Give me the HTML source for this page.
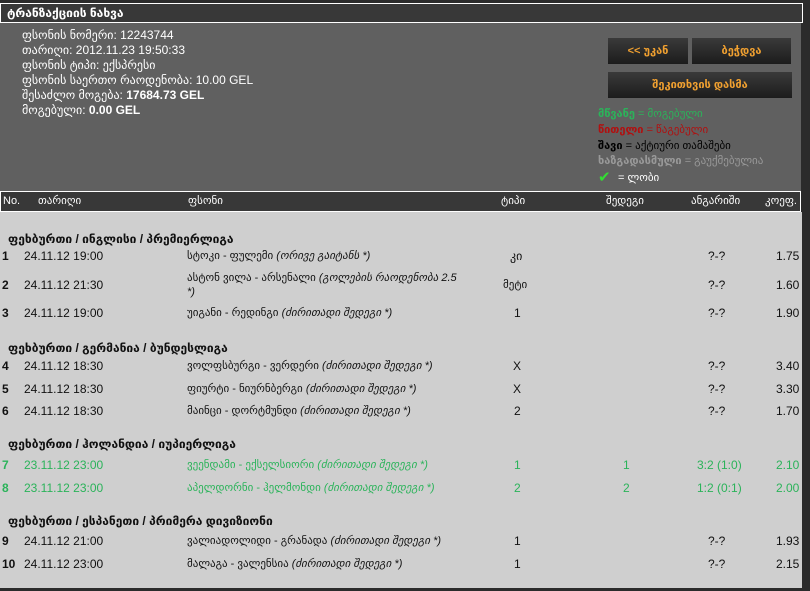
<!DOCTYPE html><html><head><meta charset="utf-8"><style>
body{margin:0;width:810px;height:591px;background:#2b2b2b;font-family:"Liberation Sans","DejaVu Sans",sans-serif;position:relative;overflow:hidden;font-size:12px}
div{position:absolute;white-space:nowrap}
.t{left:0;top:3px;width:795px;height:18px;background:#383838;border:1px solid #fff;color:#fff;font-weight:bold;font-size:12px;line-height:18px;padding-left:6px}
.info{left:0;top:23px;width:801px;height:168px;background:#606060}
.i{left:22px;color:#fff;font-size:12px}
.btn{background:linear-gradient(#3a3a3a,#1c1c1c);color:#f0a030;font-weight:bold;font-size:11px;text-align:center;line-height:26px;height:26px}
.hd{left:0;top:191px;width:799px;height:19px;background:#383838;border:1px solid #fff;color:#fff;font-size:11px;line-height:19px}
.body{left:0;top:212px;width:802px;height:376px;background:#cfcfcf}
.r{color:#111;font-size:12px}
.s{font-weight:bold;color:#111;font-size:12px;left:8px}
.g{color:#2bb35a}
.lg{font-size:11px}
em{font-style:italic}
</style></head><body>
<div class="t">ტრანზაქციის ნახვა</div>
<div class="info">
<div class="i" style="top:5px">ფსონის ნომერი: 12243744</div>
<div class="i" style="top:20px">თარიღი: 2012.11.23 19:50:33</div>
<div class="i" style="top:35px">ფსონის ტიპი: ექსპრესი</div>
<div class="i" style="top:50px">ფსონის საერთო რაოდენობა: 10.00 GEL</div>
<div class="i" style="top:65px">შესაძლო მოგება: <b>17684.73 GEL</b></div>
<div class="i" style="top:80px">მოგებული: <b>0.00 GEL</b></div>
<div class="btn" style="left:608px;top:15px;width:80px">&lt;&lt; უკან</div>
<div class="btn" style="left:692px;top:15px;width:99px">ბეჭდვა</div>
<div class="btn" style="left:608px;top:49px;width:184px">შეკითხვის დასმა</div>
<div class="lg" style="left:598px;top:84px;color:#2bb35a"><b>მწვანე</b> = მოგებული</div>
<div class="lg" style="left:598px;top:100px;color:#b01010"><b>წითელი</b> = წაგებული</div>
<div class="lg" style="left:598px;top:116px;color:#000"><b>შავი</b> = აქტიური თამაშები</div>
<div class="lg" style="left:598px;top:131px;color:#999"><b>ხაზგადასმული</b> = გაუქმებულია</div>
<div style="left:598px;top:145px;color:#33dd33;font-size:15px;font-weight:bold">✔</div>
<div style="left:618px;top:148px;color:#fff;font-size:11px">= ლობი</div>
</div>
<div class="hd"><div style="left:2px">No.</div><div style="left:37px">თარიღი</div><div style="left:187px">ფსონი</div><div style="left:500px">ტიპი</div><div style="left:605px">შედეგი</div><div style="left:690px">ანგარიში</div><div style="left:764px">კოეფ.</div></div>
<div class="body"></div>
<div class="s" style="top:232px">ფეხბურთი / ინგლისი / პრემიერლიგა</div>
<div class="s" style="top:341px">ფეხბურთი / გერმანია / ბუნდესლიგა</div>
<div class="s" style="top:437px">ფეხბურთი / ჰოლანდია / იუპიერლიგა</div>
<div class="s" style="top:514px">ფეხბურთი / ესპანეთი / პრიმერა დივიზიონი</div>

<div class="r" style="top:249px;left:2px"><b>1</b></div><div class="r" style="top:249px;left:24px">24.11.12 19:00</div><div class="r" style="top:249px;left:187px;font-size:11px">სტოკი - ფულემი <em>(ორივე გაიტანს *)</em></div><div class="r" style="top:249px;left:510px">კი</div><div class="r" style="top:249px;left:708px">?-?</div><div class="r" style="top:249px;left:776px">1.75</div>

<div class="r" style="top:271px;left:187px;font-size:11px">ასტონ ვილა - არსენალი <em>(გოლების რაოდენობა 2.5</em></div><div class="r" style="top:286px;left:187px;font-size:11px"><em>*)</em></div>
<div class="r" style="top:278px;left:2px"><b>2</b></div><div class="r" style="top:278px;left:24px">24.11.12 21:30</div><div class="r" style="top:278px;left:503px;font-size:11px">მეტი</div><div class="r" style="top:278px;left:708px">?-?</div><div class="r" style="top:278px;left:776px">1.60</div>

<div class="r" style="top:306px;left:2px"><b>3</b></div><div class="r" style="top:306px;left:24px">24.11.12 19:00</div><div class="r" style="top:306px;left:187px;font-size:11px">უიგანი - რედინგი <em>(ძირითადი შედეგი *)</em></div><div class="r" style="top:306px;left:514px">1</div><div class="r" style="top:306px;left:708px">?-?</div><div class="r" style="top:306px;left:776px">1.90</div>

<div class="r" style="top:359px;left:2px"><b>4</b></div><div class="r" style="top:359px;left:24px">24.11.12 18:30</div><div class="r" style="top:359px;left:187px;font-size:11px">ვოლფსბურგი - ვერდერი <em>(ძირითადი შედეგი *)</em></div><div class="r" style="top:359px;left:513px">X</div><div class="r" style="top:359px;left:708px">?-?</div><div class="r" style="top:359px;left:776px">3.40</div>

<div class="r" style="top:382px;left:2px"><b>5</b></div><div class="r" style="top:382px;left:24px">24.11.12 18:30</div><div class="r" style="top:382px;left:187px;font-size:11px">ფიურტი - ნიურნბერგი <em>(ძირითადი შედეგი *)</em></div><div class="r" style="top:382px;left:513px">X</div><div class="r" style="top:382px;left:708px">?-?</div><div class="r" style="top:382px;left:776px">3.30</div>

<div class="r" style="top:404px;left:2px"><b>6</b></div><div class="r" style="top:404px;left:24px">24.11.12 18:30</div><div class="r" style="top:404px;left:187px;font-size:11px">მაინცი - დორტმუნდი <em>(ძირითადი შედეგი *)</em></div><div class="r" style="top:404px;left:514px">2</div><div class="r" style="top:404px;left:708px">?-?</div><div class="r" style="top:404px;left:776px">1.70</div>

<div class="r g" style="top:458px;left:2px"><b>7</b></div><div class="r g" style="top:458px;left:24px">23.11.12 23:00</div><div class="r g" style="top:458px;left:187px;font-size:11px">ვეენდამი - ექსელსიორი <em>(ძირითადი შედეგი *)</em></div><div class="r g" style="top:458px;left:514px">1</div><div class="r g" style="top:458px;left:623px">1</div><div class="r g" style="top:458px;left:697px">3:2 (1:0)</div><div class="r g" style="top:458px;left:776px">2.10</div>

<div class="r g" style="top:481px;left:2px"><b>8</b></div><div class="r g" style="top:481px;left:24px">23.11.12 23:00</div><div class="r g" style="top:481px;left:187px;font-size:11px">აპელდორნი - ჰელმონდი <em>(ძირითადი შედეგი *)</em></div><div class="r g" style="top:481px;left:514px">2</div><div class="r g" style="top:481px;left:623px">2</div><div class="r g" style="top:481px;left:697px">1:2 (0:1)</div><div class="r g" style="top:481px;left:776px">2.00</div>

<div class="r" style="top:534px;left:2px"><b>9</b></div><div class="r" style="top:534px;left:24px">24.11.12 21:00</div><div class="r" style="top:534px;left:187px;font-size:11px">ვალიადოლიდი - გრანადა <em>(ძირითადი შედეგი *)</em></div><div class="r" style="top:534px;left:514px">1</div><div class="r" style="top:534px;left:708px">?-?</div><div class="r" style="top:534px;left:776px">1.93</div>

<div class="r" style="top:557px;left:2px"><b>10</b></div><div class="r" style="top:557px;left:24px">24.11.12 23:00</div><div class="r" style="top:557px;left:187px;font-size:11px">მალაგა - ვალენსია <em>(ძირითადი შედეგი *)</em></div><div class="r" style="top:557px;left:514px">1</div><div class="r" style="top:557px;left:708px">?-?</div><div class="r" style="top:557px;left:776px">2.15</div>
</body></html>
